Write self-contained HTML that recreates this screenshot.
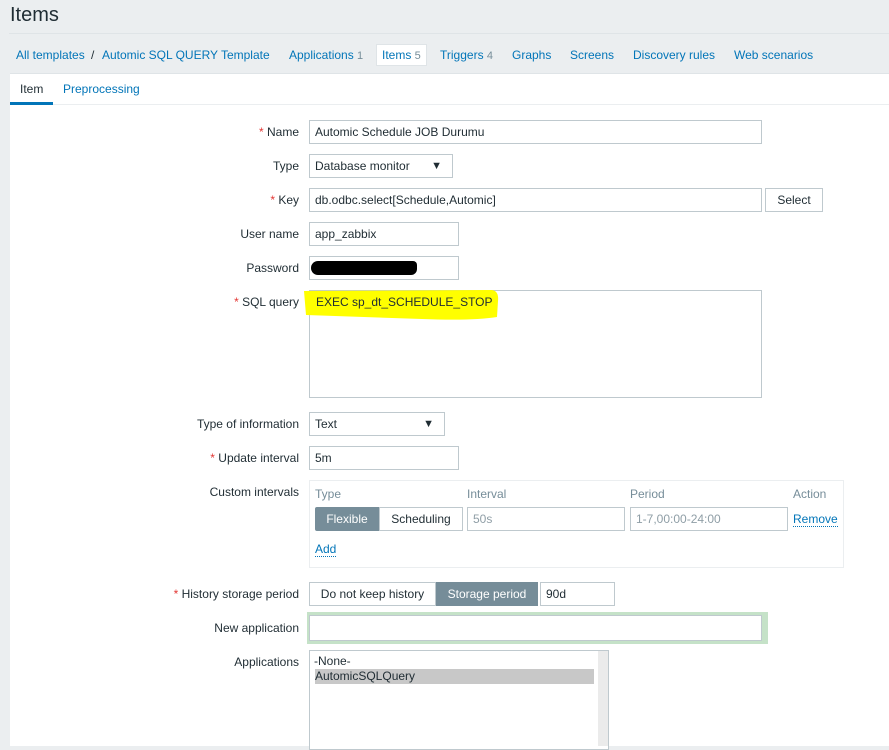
<!DOCTYPE html>
<html><head><meta charset="utf-8">
<style>
*{box-sizing:border-box;margin:0;padding:0}
body{width:889px;height:746px;overflow:hidden;background:#ebeef0;font-family:"Liberation Sans",Arial,sans-serif;font-size:12px;color:#1f2c33;position:relative}
.a{position:absolute}
.lnk{color:#0275b8}
.cnt{color:#768d99}
.lbl{position:absolute;right:590px;text-align:right;white-space:nowrap;color:#1f2c33}
.req{color:#e33734}
.in{position:absolute;background:#fff;border:1px solid #bfc9ce;padding:0 5px;line-height:22px;white-space:nowrap;overflow:hidden}
.btn{position:absolute;border:1px solid #bfc9ce;background:#fff;text-align:center}
.tb{position:absolute;top:48px;font-size:12px;white-space:nowrap}
</style></head><body>
<div class="a" style="left:10px;top:4px;font-size:20px;color:#1f2c33">Items</div>
<div class="a" style="left:9px;top:33px;width:880px;height:1px;background:#dfe4e7"></div>
<div class="tb lnk" style="left:16px">All templates</div>
<div class="tb" style="left:91px">/</div>
<div class="tb lnk" style="left:102px">Automic SQL QUERY Template</div>
<div class="tb lnk" style="left:289px">Applications <span class="cnt" style="font-size:11px">1</span></div>
<div class="a" style="top:44px;left:376px;width:51px;height:22px;background:#fff;border:1px solid #dfe4e7"></div>
<div class="tb lnk" style="left:382px">Items <span class="cnt" style="font-size:11px">5</span></div>
<div class="tb lnk" style="left:440px">Triggers <span class="cnt" style="font-size:11px">4</span></div>
<div class="tb lnk" style="left:512px">Graphs</div>
<div class="tb lnk" style="left:570px">Screens</div>
<div class="tb lnk" style="left:633px">Discovery rules</div>
<div class="tb lnk" style="left:734px">Web scenarios</div>
<div class="a" style="left:10px;top:73px;width:879px;height:673px;background:#fff;border-top:1px solid #dfe4e7"></div>
<div class="a" style="left:10px;top:104px;width:879px;height:1px;background:#ebeef0"></div>
<div class="a" style="left:20px;top:82px;font-size:12px">Item</div>
<div class="a" style="left:10px;top:102px;width:43px;height:3px;background:#0275b8"></div>
<div class="a lnk" style="left:63px;top:82px;font-size:12px">Preprocessing</div>

<div class="lbl" style="top:125px"><span class="req">*</span> Name</div>
<div class="in" style="left:309px;top:120px;width:453px;height:24px">Automic Schedule JOB Durumu</div>
<div class="lbl" style="top:159px">Type</div>
<div class="in" style="left:309px;top:154px;width:144px;height:24px">Database monitor<span style="position:absolute;right:10px;font-size:11px">▼</span></div>
<div class="lbl" style="top:193px"><span class="req">*</span> Key</div>
<div class="in" style="left:309px;top:188px;width:453px;height:24px">db.odbc.select[Schedule,Automic]</div>
<div class="btn" style="left:765px;top:188px;width:58px;height:24px;line-height:22px">Select</div>
<div class="lbl" style="top:227px">User name</div>
<div class="in" style="left:309px;top:222px;width:150px;height:24px">app_zabbix</div>
<div class="lbl" style="top:261px">Password</div>
<div class="in" style="left:309px;top:256px;width:150px;height:24px"></div>
<div class="a" style="left:311px;top:261px;width:106px;height:14px;background:#000;border-radius:7px 4px 6px 7px"></div>
<div class="lbl" style="top:295px"><span class="req">*</span> SQL query</div>
<div class="in" style="left:309px;top:290px;width:453px;height:108px"></div>
<svg class="a" style="left:302px;top:287px" width="200" height="36"><path d="M2 4 L190 3 Q197 4 196 14 L195 30 Q170 34 120 32 L4 28 Z" fill="#ffff00"/></svg>
<div class="a" style="left:316px;top:295px">EXEC sp_dt_SCHEDULE_STOP</div>
<div class="lbl" style="top:417px">Type of information</div>
<div class="in" style="left:309px;top:412px;width:136px;height:24px">Text<span style="position:absolute;right:10px;font-size:11px">▼</span></div>
<div class="lbl" style="top:451px"><span class="req">*</span> Update interval</div>
<div class="in" style="left:309px;top:446px;width:150px;height:24px">5m</div>
<div class="lbl" style="top:485px">Custom intervals</div>
<div class="a" style="left:309px;top:480px;width:535px;height:88px;border:1px solid #ebeef0"></div>
<div class="a" style="left:315px;top:487px;color:#768d99">Type</div>
<div class="a" style="left:467px;top:487px;color:#768d99">Interval</div>
<div class="a" style="left:630px;top:487px;color:#768d99">Period</div>
<div class="a" style="left:793px;top:487px;color:#768d99">Action</div>
<div class="a" style="left:315px;top:507px;width:64px;height:24px;background:#768d99;color:#fff;line-height:24px;text-align:center;border-radius:2px 0 0 2px">Flexible</div>
<div class="a" style="left:379px;top:507px;width:84px;height:24px;border:1px solid #bfc9ce;line-height:22px;text-align:center">Scheduling</div>
<div class="in" style="left:467px;top:507px;width:158px;height:24px;color:#8f9ea6">50s</div>
<div class="in" style="left:630px;top:507px;width:158px;height:24px;color:#8f9ea6">1-7,00:00-24:00</div>
<div class="a lnk" style="left:793px;top:512px;border-bottom:1px dotted #0275b8">Remove</div>
<div class="a lnk" style="left:315px;top:542px;border-bottom:1px dotted #0275b8">Add</div>
<div class="lbl" style="top:587px"><span class="req">*</span> History storage period</div>
<div class="a" style="left:309px;top:582px;width:127px;height:24px;border:1px solid #bfc9ce;line-height:22px;text-align:center">Do not keep history</div>
<div class="a" style="left:436px;top:582px;width:102px;height:24px;background:#768d99;color:#fff;line-height:24px;text-align:center">Storage period</div>
<div class="in" style="left:540px;top:582px;width:75px;height:24px">90d</div>
<div class="lbl" style="top:621px">New application</div>
<div class="a" style="left:307px;top:612px;width:461px;height:32px;background:#c5e2c8"></div>
<div class="in" style="left:309px;top:615px;width:453px;height:26px"></div>
<div class="lbl" style="top:655px">Applications</div>
<div class="a" style="left:309px;top:650px;width:300px;height:100px;background:#fff;border:1px solid #bfc9ce"></div>
<div class="a" style="left:598px;top:651px;width:10px;height:95px;background:#ebebeb"></div>
<div class="a" style="left:314px;top:654px">-None-</div>
<div class="a" style="left:315px;top:669px;width:279px;height:15px;background:#c8c8c8;line-height:15px">AutomicSQLQuery</div>
</body></html>
